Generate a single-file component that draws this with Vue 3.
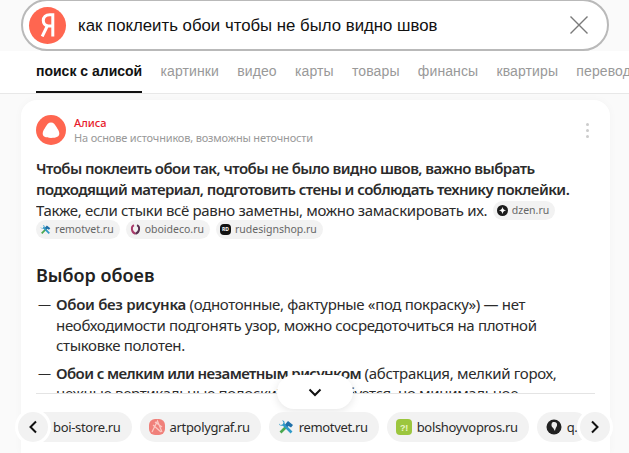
<template>
  <div class="page">
    <div class="search">
      <div class="logo"><svg width="16" height="24" viewBox="0 0 16 24"><path d="M12.800 23.500V1.800H9.800C5.600 1.800 3.300 4 3.300 7.600c0 3.300 1.800 5 4.900 5.300h4.600M7.500 12.500 2.200 23.500" stroke="#fff" stroke-width="3" fill="none"/></svg></div>
      <div class="query">как поклеить обои чтобы не было видно швов</div>
      <svg class="close" width="20" height="20" viewBox="0 0 20 20"><path d="M1.500 1.500 18.500 18.500M18.500 1.500 1.500 18.500" stroke="#7a7a7a" stroke-width="1.400" fill="none"/></svg>
    </div>
    <nav class="tabs">
      <span v-for="t in tabs" :key="t" class="tab" :class="{ active: t === tabs[0] }">{{ t }}</span>
    </nav>
    <main class="card">
      <div class="clip">
        <header class="head">
          <svg class="alice" width="30" height="30" viewBox="0 0 30 30"><circle cx="15" cy="15" r="15" fill="#ff6650"/><path d="M15 7.500c2.600 0 4 2 5.300 4.300 1.300 2.200 3 4.500 3 6.700 0 3-2.600 4.400-8.300 4.400s-8.300-1.400-8.300-4.400c0-2.200 1.700-4.500 3-6.700C11 9.500 12.400 7.500 15 7.500z" fill="#fff"/></svg>
          <div class="who">
            <div class="name">Алиса</div>
            <div class="note">На основе источников, возможны неточности</div>
          </div>
          <div class="dots"><i></i><i></i><i></i></div>
        </header>
        <p class="lead">
          <b>Чтобы поклеить обои так, чтобы не было видно швов, важно выбрать подходящий материал, подготовить стены и соблюдать технику поклейки.</b>
          Также, если стыки всё равно заметны, можно замаскировать их.
          <span class="src gap"><svg class="fav" viewBox="0 0 12 12"><circle cx="6" cy="6" r="6" fill="#1b1b1b"/><path d="M6 2c.3 2.500 1.500 3.700 4 4-2.500.3-3.700 1.500-4 4-.3-2.500-1.500-3.700-4-4 2.500-.3 3.700-1.500 4-4z" fill="#fff"/></svg>dzen.ru</span>
        </p>
        <div class="srcs">
          <span class="src"><svg class="fav" viewBox="0 0 16 16"><path d="M2.500 13.500 9 7" stroke="#4aa84f" stroke-width="2.600"/><path d="M13.500 13.500 5 5" stroke="#2f9ac8" stroke-width="2.600"/><path d="M7 5.500 10 2l5 4-2 2.500-2.500-1.500-1 1z" fill="#1f6fa8"/><path d="M1 4.500 2.500 6 5 5.500 5.500 3 4 1.500C6 1 7 3 6.500 5L5 6.500C3 7 1 6.500 1 4.500z" fill="#2f9ac8"/></svg>remotvet.ru</span>
          <span class="src"><svg class="fav" viewBox="0 0 14 14"><path d="M5 1.500C1 3.500 1.500 10.500 7 12.500" stroke="#a83a6a" stroke-width="2.400" fill="none"/><path d="M9 1.500c4 2 3.500 9-2 11" stroke="#5a3050" stroke-width="2.400" fill="none"/></svg>oboideco.ru</span>
          <span class="src"><i class="fav rd">RD</i>rudesignshop.ru</span>
        </div>
        <h2>Выбор обоев</h2>
        <ul>
          <li><b>Обои без рисунка</b> (однотонные, фактурные «под покраску») — нет необходимости подгонять узор, можно сосредоточиться на плотной стыковке полотен.</li>
          <li><b>Обои с мелким или незаметным рисунком</b> (абстракция, мелкий горох, нежные вертикальные полоски) — не требуется, но минимальное</li>
        </ul>
      </div>
      <div class="more"><svg width="14" height="9" viewBox="0 0 14 9"><path d="M1.500 1.500 7 7l5.500-5.500" stroke="#111" stroke-width="2" fill="none"/></svg></div>
      <div class="carousel">
        <div class="chips">
          <span class="chip first">boi-store.ru</span>
          <span class="chip"><svg class="cf" viewBox="0 0 16 16"><rect width="16" height="16" rx="6" fill="#f0807a"/><path d="M3 13 8.500 2 13 13M4 6l8 7M6 3l7 5" stroke="#fbc9c4" stroke-width="1.200" fill="none"/></svg>artpolygraf.ru</span>
          <span class="chip"><svg class="cf" viewBox="0 0 16 16"><path d="M2.500 13.500 9 7" stroke="#4aa84f" stroke-width="2.600"/><path d="M13.500 13.500 5 5" stroke="#2f9ac8" stroke-width="2.600"/><path d="M7 5.500 10 2l5 4-2 2.500-2.500-1.500-1 1z" fill="#1f6fa8"/><path d="M1 4.500 2.500 6 5 5.500 5.500 3 4 1.500C6 1 7 3 6.500 5L5 6.500C3 7 1 6.500 1 4.500z" fill="#2f9ac8"/></svg>remotvet.ru</span>
          <span class="chip"><svg class="cf" viewBox="0 0 16 16"><rect width="16" height="16" rx="4" fill="#9cc63e"/><text x="8" y="11.500" font-size="9" font-family="Liberation Sans" font-weight="700" fill="#e9f5c8" text-anchor="middle">?!</text></svg>bolshoyvopros.ru</span>
          <span class="chip"><svg class="cf" viewBox="0 0 16 16"><circle cx="8" cy="8" r="7.500" fill="#222"/><path d="M7 3c3-.5 4.500 1 4 3.500-.3 1.700-1.500 2-2 5.500-1-1.500-1.500-3-3-4C5 6 5.500 3.500 7 3z" fill="#eee"/></svg>q.</span>
        </div>
        <button class="arrow left"><svg width="10" height="14" viewBox="0 0 10 14"><path d="M8 1.500 2.500 7 8 12.500" stroke="#111" stroke-width="2" fill="none"/></svg></button>
        <button class="arrow right"><svg width="10" height="14" viewBox="0 0 10 14"><path d="M2 1.500 7.500 7 2 12.500" stroke="#111" stroke-width="2" fill="none"/></svg></button>
      </div>
    </main>
  </div>
</template>

<script setup>
const tabs = ['поиск с алисой', 'картинки', 'видео', 'карты', 'товары', 'финансы', 'квартиры', 'перевод']
</script>

<style>
html, body { margin: 0; overflow: hidden; background: #fff; }
</style>

<style scoped>
.page { width: 629px; height: 453px; overflow: hidden; background: #fafafa; font-family: "Noto Sans", sans-serif; color: #2b2b2b; display: flex; flex-direction: column; }
.search { flex: none; box-sizing: border-box; height: 52px; margin: -1px 20px 0 21px; border: 2px solid #b9b9b9; border-radius: 26px; background: #fff; display: flex; align-items: center; padding-left: 6px; padding-right: 18px; }
.logo { width: 37px; height: 37px; border-radius: 50%; background: #ff6650; flex: none; display: flex; align-items: center; justify-content: center; }
.query { flex: 1; margin: 1px 0 0 12px; font: 16.800px "Liberation Sans", sans-serif; color: #111; white-space: nowrap; }
.tabs { flex: none; box-sizing: border-box; height: 43px; background: #fff; border-bottom: 1px solid #e8e8e8; padding-left: 36px; display: flex; gap: 18.300px; white-space: nowrap; }
.tab { font: 14px/41px "Liberation Sans", sans-serif; letter-spacing: .1px; color: #999; height: 42px; box-sizing: border-box; }
.tab.active { font-weight: 700; color: #111; border-bottom: 2px solid #111; letter-spacing: 0; }
.card { position: relative; flex: 1; margin: 6px 19px 0 21px; background: #fff; border-radius: 16px 16px 0 0; box-shadow: 0 0 8px rgba(0,0,0,.03); }
.clip { box-sizing: border-box; height: 294px; margin: 0 15px 0 15px; border-bottom: 1px solid #e4e4e4; overflow: hidden; }
.head { display: flex; align-items: center; padding-top: 15px; }
.alice { flex: none; }
.who { margin-left: 8px; flex: 1; }
.name { font-size: 11px; line-height: 15px; font-weight: 500; color: #e8192c; }
.note { font-size: 11px; line-height: 15px; color: #999; letter-spacing: -.17px; }
.dots { display: flex; flex-direction: column; gap: 3px; margin-right: 6px; }
.dots i { width: 3px; height: 3px; border-radius: 50%; background: #ccc; }
.lead { margin: 13px 5px 0 0; font-size: 15px; line-height: 21px; letter-spacing: -.33px; }
.lead b { font-weight: 600; letter-spacing: -.55px; }
.src { display: inline-flex; align-items: center; height: 19px; border-radius: 10px; background: #f2f2f2; padding: 0 6px 0 4px; font-size: 10.500px; letter-spacing: 0; line-height: 19px; color: #666; white-space: nowrap; vertical-align: 0; }
.gap { margin-left: 2px; }
.fav { width: 11px; height: 11px; margin-right: 4px; flex: none; display: block; }
.rd { border-radius: 4px; background: #111; color: #fff; font-size: 5px; line-height: 11px; text-align: center; font-style: normal; font-weight: 700; letter-spacing: 0; }
.srcs { display: flex; gap: 6px; margin-top: -1px; }
h2 { margin: 24px 0 0; font-size: 18px; line-height: 24px; font-weight: 600; color: #222; }
ul { list-style: none; margin: 7px 5px 0 0; padding: 0; }
li { position: relative; padding-left: 20px; font-size: 15px; line-height: 20.500px; margin-bottom: 7px; letter-spacing: -.33px; }
li b { font-weight: 600; letter-spacing: -.3px; }
li:last-child b { letter-spacing: -.6px; }
li::before { content: "—"; position: absolute; left: 2px; font-size: 13px; }
.more { position: absolute; left: 256px; top: 275px; width: 76px; height: 34px; border-radius: 17px; background: #fff; box-shadow: 0 2px 8px rgba(0,0,0,.1); display: flex; align-items: center; justify-content: center; }
.carousel { position: relative; margin: 18px 0 0 -3px; height: 30px; }
.chips { display: flex; gap: 8px; overflow: hidden; padding-left: 1px; }
.chip { flex: none; display: flex; align-items: center; height: 30px; box-sizing: border-box; border-radius: 15px; background: #f2f2f2; padding: 0 11px 0 9px; font-size: 13px; letter-spacing: -.33px; color: #2b2b2b; white-space: nowrap; }
.chip.first { padding-left: 34px; }
.cf { width: 16px; height: 16px; margin-right: 5px; }
.arrow { position: absolute; top: 0; width: 30px; height: 30px; padding: 0; border: 0; border-radius: 50%; background: #f2f2f2; box-shadow: 0 0 0 3px #fff; display: flex; align-items: center; justify-content: center; }
.left { left: 0; }
.right { right: 0; }
</style>
